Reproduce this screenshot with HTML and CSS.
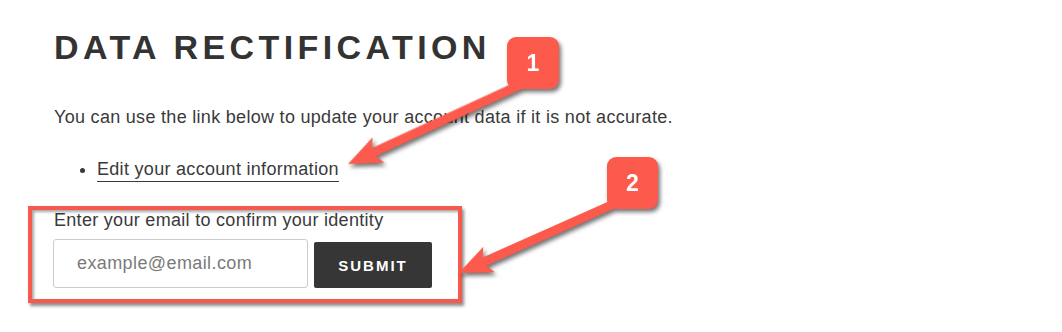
FILE: index.html
```html
<!DOCTYPE html>
<html>
<head>
    <link rel="stylesheet" href="styles.css">
</head>
<body>
    <div class="page">
        <h1 class="title">Data Rectification</h1>
        <p class="intro">You can use the link below to update your account data if it is not accurate.</p>
        <ul class="links">
            <li><a href="#" class="account-link">Edit your account information</a></li>
        </ul>
        <form class="confirm-form">
            <label for="email">Enter your email to confirm your identity</label>
            <div class="form-row">
                <input type="email" id="email" placeholder="example@email.com">
                <button type="button" class="submit-button">Submit</button>
            </div>
        </form>
    </div>

    <!-- annotation layer -->
    <div class="note-box"></div>
    <svg class="notes" width="1062" height="332" viewBox="0 0 1062 332">
        <g class="note-shape">
            <polygon transform="translate(522 84) rotate(155.3)"
                     points="0,-4.5 163,-4.5 158,-14 191.5,0 158,14 163,4.5 0,4.5"></polygon>
            <polygon transform="translate(616 203) rotate(156)"
                     points="0,-4.5 144,-4.5 139,-14 172,0 139,14 144,4.5 0,4.5"></polygon>
            <rect x="507" y="37" width="52" height="52" rx="9"></rect>
            <rect x="607" y="157" width="51" height="52" rx="9"></rect>
        </g>
        <text class="note-num" x="533" y="71">1</text>
        <text class="note-num" x="632.5" y="191">2</text>
    </svg>
</body>
</html>
```

FILE: styles.css
```css
body {
    margin: 0;
    background: #fff;
    color: #3a3a3a;
    font-family: "Liberation Sans", Arial, sans-serif;
}
.page {
    padding: 0 0 0 54px;
}
.title {
    margin: 0;
    padding-top: 27px;
    font-size: 34px;
    font-weight: bold;
    letter-spacing: 4.4px;
    text-transform: uppercase;
    color: #333;
    line-height: 40px;
}
.intro {
    margin: 40px 0 0;
    font-size: 18px;
    letter-spacing: 0.3px;
    line-height: 20px;
}
.links {
    margin: 32px 0 0;
    padding-left: 43px;
    font-size: 18px;
    letter-spacing: 0.3px;
    line-height: 20px;
}
.account-link {
    color: #3a3a3a;
    text-decoration: none;
    border-bottom: 1px solid #3a3a3a;
    padding-bottom: 2px;
}
.confirm-form {
    margin-top: 31px;
    font-size: 18px;
    letter-spacing: 0.3px;
}
.confirm-form label {
    display: block;
    line-height: 20px;
}
.form-row {
    display: flex;
    align-items: flex-end;
    gap: 6px;
    margin-top: 9px;
}
.form-row input {
    box-sizing: border-box;
    width: 255px;
    height: 49px;
    margin-left: -1px;
    padding: 0 0 0 23px;
    border: 1px solid #ccc;
    border-radius: 3px;
    font-family: inherit;
    font-size: 18px;
    letter-spacing: 0.4px;
    color: #333;
}
.form-row input::placeholder {
    color: #7a7a7a;
}
.submit-button {
    width: 118px;
    height: 46px;
    border: none;
    border-radius: 2px;
    background: #363636;
    color: #fff;
    font-family: inherit;
    font-size: 15px;
    font-weight: bold;
    letter-spacing: 2px;
    text-transform: uppercase;
}
.note-box {
    position: absolute;
    left: 28px;
    top: 206px;
    width: 426px;
    height: 89px;
    border: 4px solid #f75a4c;
    box-shadow: 2px 3px 3px rgba(0, 0, 0, 0.45), inset 2px 2px 3px rgba(0, 0, 0, 0.35);
}
.notes {
    position: absolute;
    left: 0;
    top: 0;
    pointer-events: none;
}
.note-shape {
    fill: #fb5a4c;
    filter: drop-shadow(2px 3px 2px rgba(0, 0, 0, 0.55));
}
.note-num {
    fill: #fff;
    font-family: "Liberation Sans", Arial, sans-serif;
    font-size: 23px;
    font-weight: bold;
    text-anchor: middle;
}
```
